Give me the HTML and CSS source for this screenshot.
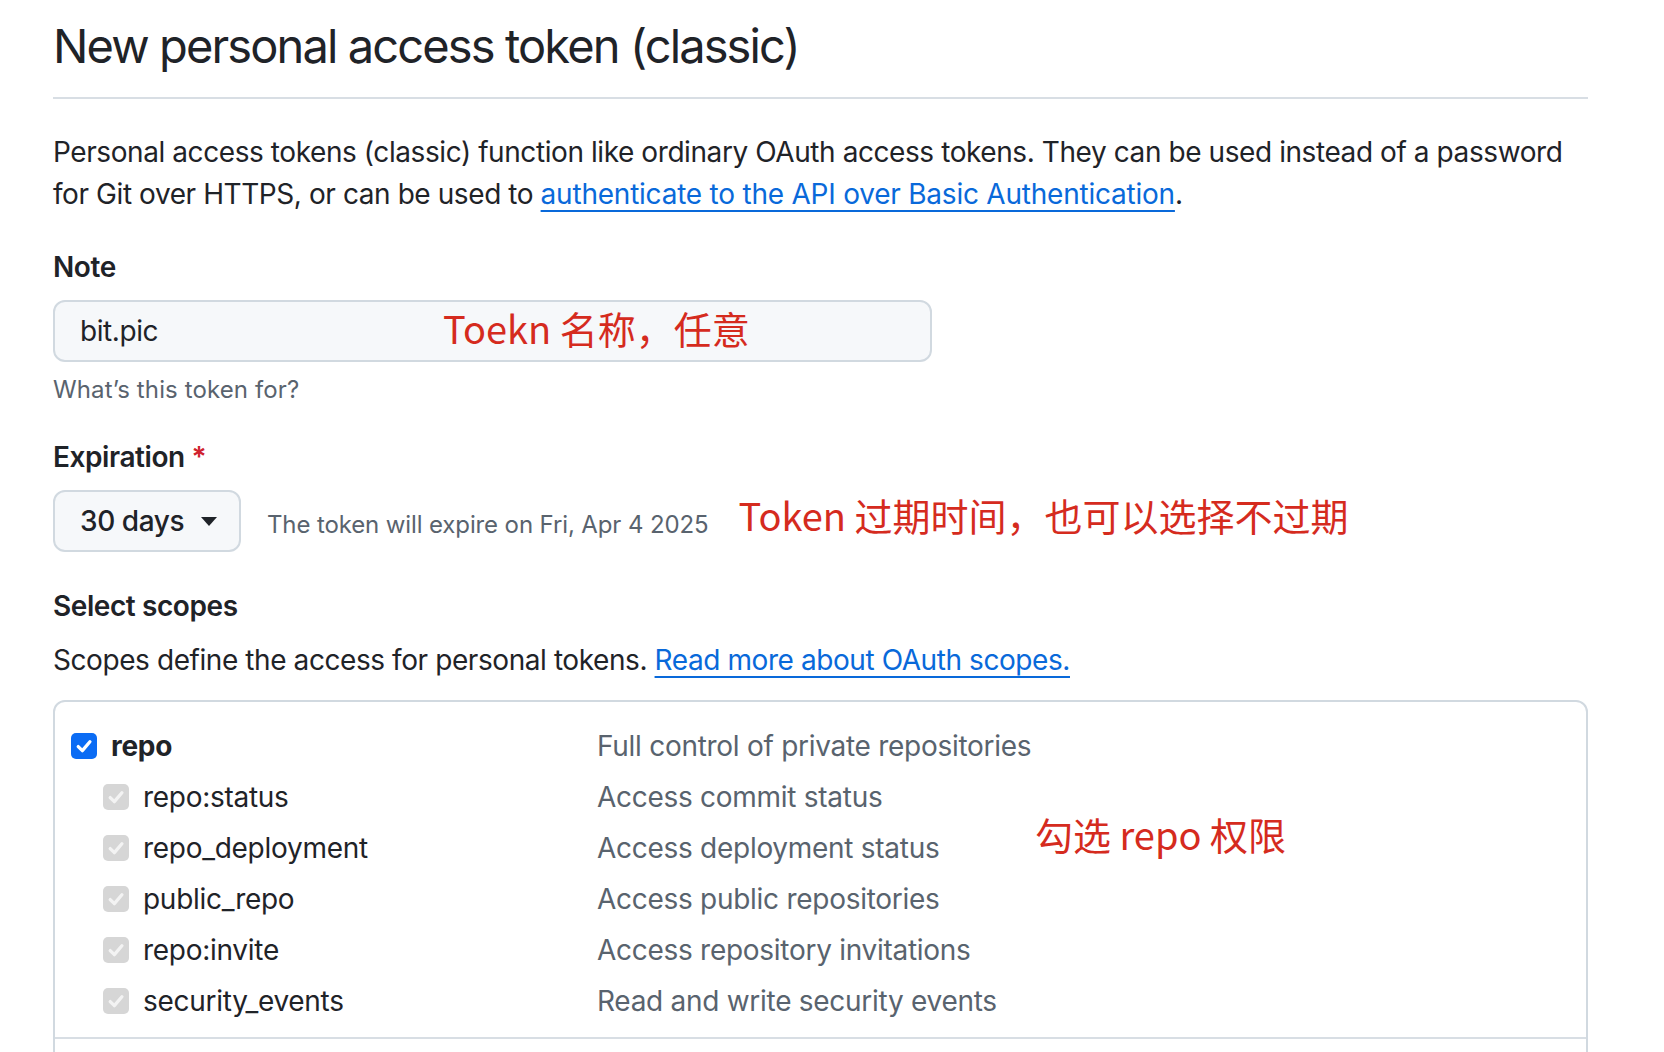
FILE: index.html
```html
<!DOCTYPE html>
<html lang="zh-CN">
<head>
<meta charset="utf-8">
<title>New personal access token (classic)</title>
<link rel="stylesheet" href="styles.css">
</head>
<body>
<main class="page">
  <div class="subhead">
    <h2 class="subhead-heading">New personal access token (classic)</h2>
  </div>
  <p class="intro">Personal access tokens (classic) function like ordinary OAuth access tokens. They can be used instead of a password for Git over HTTPS, or can be used to <a href="#" class="link">authenticate to the API over Basic Authentication</a>.</p>

  <div class="form-group note-group">
    <label class="form-label" for="note">Note</label>
    <div class="input-wrap">
      <input id="note" class="form-control" type="text" value="bit.pic">
      <span class="annot annot-note">Toekn 名称，任意</span>
    </div>
    <p class="note">What’s this token for?</p>
  </div>

  <div class="form-group expire-group">
    <label class="form-label">Expiration <span class="required">*</span></label>
    <div class="expire-row">
      <button class="select-btn" type="button"><span>30 days</span><span class="caret"></span></button>
      <span class="expire-note">The token will expire on Fri, Apr 4 2025</span>
      <span class="annot annot-expire">Token 过期时间，也可以选择不过期</span>
    </div>
  </div>

  <div class="form-group scopes">
    <h3 class="form-label">Select scopes</h3>
    <p class="scopes-desc">Scopes define the access for personal tokens. <a class="link" href="#">Read more about OAuth scopes.</a></p>
    <div class="scope-box">
      <div class="scope-group">
        <div class="scope-row parent">
          <label class="scope-name"><span class="cb cb-on"><svg viewBox="0 0 16 16"><path d="M3.8 8.4 L6.8 11.4 L12.3 4.9"/></svg></span><strong>repo</strong></label>
          <span class="scope-desc">Full control of private repositories</span>
        </div>
        <div class="scope-row child">
          <label class="scope-name"><span class="cb cb-dis"><svg viewBox="0 0 16 16"><path d="M3.8 8.4 L6.8 11.4 L12.3 4.9"/></svg></span>repo:status</label>
          <span class="scope-desc">Access commit status</span>
        </div>
        <div class="scope-row child">
          <label class="scope-name"><span class="cb cb-dis"><svg viewBox="0 0 16 16"><path d="M3.8 8.4 L6.8 11.4 L12.3 4.9"/></svg></span>repo_deployment</label>
          <span class="scope-desc">Access deployment status</span>
        </div>
        <div class="scope-row child">
          <label class="scope-name"><span class="cb cb-dis"><svg viewBox="0 0 16 16"><path d="M3.8 8.4 L6.8 11.4 L12.3 4.9"/></svg></span>public_repo</label>
          <span class="scope-desc">Access public repositories</span>
        </div>
        <div class="scope-row child">
          <label class="scope-name"><span class="cb cb-dis"><svg viewBox="0 0 16 16"><path d="M3.8 8.4 L6.8 11.4 L12.3 4.9"/></svg></span>repo:invite</label>
          <span class="scope-desc">Access repository invitations</span>
        </div>
        <div class="scope-row child">
          <label class="scope-name"><span class="cb cb-dis"><svg viewBox="0 0 16 16"><path d="M3.8 8.4 L6.8 11.4 L12.3 4.9"/></svg></span>security_events</label>
          <span class="scope-desc">Read and write security events</span>
        </div>
        <span class="annot annot-scope">勾选 repo 权限</span>
      </div>
      <div class="scope-group scope-group-next"></div>
    </div>
  </div>
</main>
</body>
</html>
```

FILE: styles.css
```css
* { box-sizing: border-box; }

html, body {
  margin: 0;
  padding: 0;
  background: #ffffff;
}

body {
  font-family: Inter, "Noto Sans CJK SC", sans-serif;
  color: #1f2328;
  font-size: 28px;
  line-height: 42px;
  letter-spacing: -0.015em;
}

.page {
  width: 1535px;
  margin-left: 53px;
  padding-top: 16px;
}

.subhead {
  border-bottom: 2px solid #d8dee4;
  padding-bottom: 21px;
}

.subhead-heading {
  margin: 0;
  font-size: 47px;
  line-height: 60px;
  font-weight: 400;
  letter-spacing: -0.04em;
}

.intro {
  margin: 32px 0 0;
}

.intro .link {
  letter-spacing: -0.008em;
}

.link {
  color: #0969da;
  text-decoration: underline;
  text-underline-offset: 6px;
  text-decoration-thickness: 2px;
}

.form-group {
  margin-top: 29px;
}

.note-group {
  margin-top: 31px;
}

.expire-group {
  margin-top: 28px;
}

.form-label {
  display: block;
  margin: 0;
  font-size: 28px;
  line-height: 42px;
  font-weight: 600;
}

.required {
  color: #cf222e;
}

.input-wrap {
  position: relative;
  margin-top: 12px;
  width: 879px;
}

.form-control {
  display: block;
  width: 879px;
  height: 62px;
  padding: 0 25px;
  border: 2px solid #d1d9e0;
  border-radius: 12px;
  background: #f6f8fa;
  font-family: Inter, "Noto Sans CJK SC", sans-serif;
  font-size: 28px;
  letter-spacing: -0.015em;
  color: #1f2328;
  outline: none;
}

.annot {
  color: #d52b1e;
  font-family: "Noto Sans CJK SC", sans-serif;
  font-size: 38px;
  line-height: 48px;
  letter-spacing: 0;
  white-space: nowrap;
}

.annot-note {
  position: absolute;
  left: 390px;
  top: 4px;
}

.note {
  margin: 10px 0 0;
  font-size: 24px;
  line-height: 36px;
  letter-spacing: 0.005em;
  color: #59636e;
}

.expire-row {
  display: flex;
  align-items: center;
  margin-top: 12px;
}

.select-btn {
  display: flex;
  align-items: center;
  justify-content: space-between;
  width: 188px;
  height: 62px;
  padding: 0 22px 0 25px;
  border: 2px solid #d1d9e0;
  border-radius: 12px;
  background: #f6f8fa;
  font-family: Inter, sans-serif;
  font-size: 28px;
  font-weight: 500;
  letter-spacing: -0.015em;
  color: #1f2328;
}

.caret {
  width: 0;
  height: 0;
  border-left: 8px solid transparent;
  border-right: 8px solid transparent;
  border-top: 9px solid #1f2328;
}

.expire-note {
  margin-left: 26px;
  margin-top: 7px;
  font-size: 24px;
  line-height: 36px;
  letter-spacing: -0.005em;
  color: #59636e;
}

.annot-expire {
  margin-left: 30px;
  margin-bottom: 12px;
}

.scopes {
  margin-top: 33px;
}

.scopes-desc {
  margin: 12px 0 0;
  letter-spacing: -0.015em;
}

.scope-box {
  margin-top: 19px;
  border: 2px solid #d1d9e0;
  border-radius: 12px;
}

.scope-group {
  position: relative;
  padding: 18px 16px 11px;
}

.scope-group-next {
  height: 60px;
  border-top: 2px solid #d8dee4;
}

.scope-row {
  display: grid;
  grid-template-columns: 526px 1fr;
  align-items: center;
  height: 51px;
}

.scope-row.child .scope-name {
  padding-left: 32px;
}

.scope-name {
  display: flex;
  align-items: center;
  gap: 14px;
  letter-spacing: -0.01em;
}

.scope-name strong {
  font-weight: 700;
}

.scope-desc {
  color: #59636e;
  letter-spacing: -0.01em;
}

.cb {
  display: flex;
  align-items: center;
  justify-content: center;
  width: 26px;
  height: 26px;
  border-radius: 5px;
  flex: none;
}

.cb svg {
  width: 22px;
  height: 22px;
  fill: none;
  stroke-width: 2.4;
  stroke-linecap: round;
  stroke-linejoin: round;
}

.cb-on {
  background: #0b6cf4;
}

.cb-on svg {
  stroke: #ffffff;
}

.cb-dis {
  background: #d6d6d6;
}

.cb-dis svg {
  stroke: #f3f3f3;
}

.annot-scope {
  position: absolute;
  left: 980px;
  top: 108px;
}
```
